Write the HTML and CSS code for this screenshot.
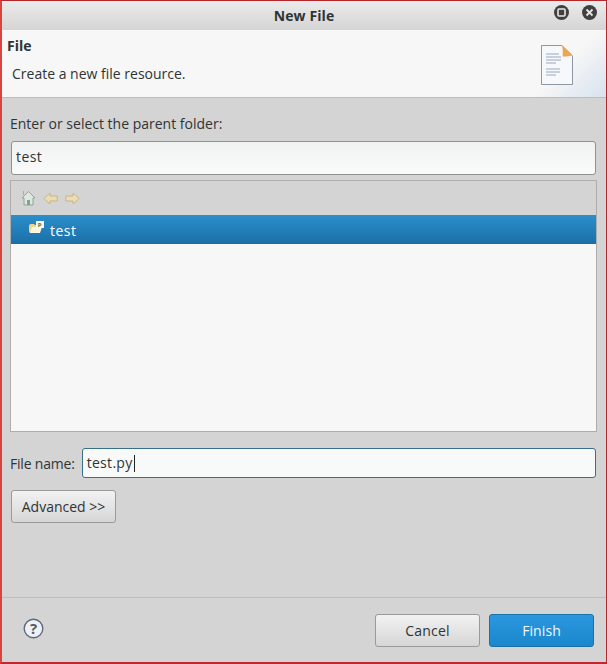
FILE: index.html
```html
<!DOCTYPE html>
<html lang="en">
<head>
    <meta charset="UTF-8">
    <title>New File</title>
    <link rel="stylesheet" href="styles.css">
</head>
<body>
    <div class="window">
        <div class="titlebar">
            <span class="title">New File</span>
            <div class="win-buttons">
                <span class="win-btn">
                    <svg width="13" height="13" viewBox="0 0 13 13"><rect x="3" y="3" width="7" height="7" rx="1" fill="none" stroke="#e8e8e8" stroke-width="1.6"/></svg>
                </span>
                <span class="win-btn">
                    <svg width="13" height="13" viewBox="0 0 13 13"><path d="M3.5 3.5l6 6M9.5 3.5l-6 6" stroke="#e8e8e8" stroke-width="1.8"/></svg>
                </span>
            </div>
        </div>

        <div class="banner">
            <div class="banner-text">
                <div class="banner-title">File</div>
                <div class="banner-desc">Create a new file resource.</div>
            </div>
            <svg class="banner-icon" width="32" height="41" viewBox="0 0 32 41">
                <path d="M.5.5H21L31.5 11V39.5H.5Z" fill="#f6f8fb" stroke="#8b97a5"/>
                <path d="M21 .5c1 4 1 8 .5 11 3 .3 7-.3 10-1.500Z" fill="#eda650"/>
                <path d="M5 9h13M5 12h15M5 15h15M5 18h10M5 24h14M5 27h14M5 30h10" stroke="#98a8bd" stroke-width="1.200"/>
            </svg>
        </div>

        <div class="content">
            <label class="field-label">Enter or select the parent folder:</label>
            <div class="input parent-input">test</div>

            <div class="tree">
                <div class="tree-toolbar">
                    <svg width="15" height="16" viewBox="0 0 15 16"><path d="M7.500 1.500L1 8h2v7h9V8h2Z" fill="#dfe8e0" stroke="#8fa39a"/><path d="M2.500 1v4" stroke="#b9a88f"/><rect x="6" y="10" width="3" height="5" fill="#7fa58f"/></svg>
                    <svg width="15" height="13" viewBox="0 0 15 13"><path d="M.8 6.500L7 1v3h7.200v5H7v3Z" fill="#ebdcb5" stroke="#c9b585"/></svg>
                    <svg width="15" height="13" viewBox="0 0 15 13"><path d="M14.200 6.500L8 1v3H.8v5H8v3Z" fill="#ebdcb5" stroke="#c9b585"/></svg>
                </div>
                <div class="tree-list">
                    <div class="tree-row">
                        <svg width="15" height="13" viewBox="0 0 15 13"><path d="M0 5q0-2 2-2h3l1 1h3v8H2q-2 0-2-2Z" fill="#f3d68c"/><path d="M1 12l2-6h10l-2 6Z" fill="#fdf6e0"/><rect x="7" y="0" width="8" height="7" fill="#f4f7f2"/><text x="11" y="6.300" text-anchor="middle" class="badge-mark">P</text></svg>
                        <span>test</span>
                    </div>
                </div>
            </div>

            <div class="name-row">
                <label class="name-label">File name:</label>
                <div class="input name-input">test.py<span class="caret"></span></div>
            </div>

            <button class="btn advanced">Advanced &gt;&gt;</button>
        </div>

        <div class="footer">
            <svg class="help" width="21" height="21" viewBox="0 0 21 21">
                <circle cx="10.500" cy="10.500" r="9.300" fill="#eef1f5" stroke="#5f6b7c" stroke-width="1.400"/>
                <text x="10.500" y="16" text-anchor="middle" class="help-mark">?</text>
            </svg>
            <div class="footer-buttons">
                <button class="btn cancel">Cancel</button>
                <button class="btn finish">Finish</button>
            </div>
        </div>
    </div>
</body>
</html>
```

FILE: styles.css
```css
html, body {
    margin: 0;
    padding: 0;
    height: 100%;
}

body {
    font-family: 'Open Sans', sans-serif;
    font-size: 14px;
    color: #2e3436;
    overflow: hidden;
}

.window {
    box-sizing: border-box;
    width: 607px;
    height: 664px;
    display: flex;
    flex-direction: column;
    background: #d4d4d4;
    border: 1px solid #b5272b;
    border-left: 2px solid #d9443f;
    border-bottom: 2px solid #c0282c;
}

.titlebar {
    height: 29px;
    flex: none;
    display: flex;
    align-items: center;
    justify-content: center;
    position: relative;
    background: linear-gradient(#ecebeb, #d5d5d5);
}

.title {
    font-weight: 700;
    font-size: 14px;
    letter-spacing: 0.1px;
}

.win-buttons {
    position: absolute;
    top: 4px;
    right: 9px;
    display: flex;
    gap: 13px;
}

.win-btn {
    width: 15px;
    height: 15px;
    border-radius: 50%;
    background: #404040;
    display: flex;
    align-items: center;
    justify-content: center;
}

.banner {
    height: 67px;
    flex: none;
    display: flex;
    justify-content: space-between;
    background: linear-gradient(135deg, #f7f7f7 89%, #d8e2ee 100%);
    border-bottom: 1px solid #bdbdbd;
}

.banner-text {
    padding: 7px 0 0 5px;
}

.banner-title {
    font-weight: 700;
    font-size: 14px;
    line-height: 18px;
}

.banner-desc {
    margin: 10px 0 0 5px;
    line-height: 18px;
}

.banner-icon {
    margin: 15px 33px 0 0;
}

.content {
    flex: 1;
    display: flex;
    flex-direction: column;
    padding: 17px 9px 0 8px;
}

.field-label {
    line-height: 18px;
}

.input {
    box-sizing: border-box;
    background: linear-gradient(#f0f2f2, #fafafa);
    border: 1px solid #8f9292;
    border-radius: 3px;
    line-height: 18px;
    letter-spacing: 0.4px;
}

.parent-input {
    height: 34px;
    margin: 8px 1px 0 1px;
    padding: 6px 4px;
}

.tree {
    height: 250px;
    margin-top: 5px;
    display: flex;
    flex-direction: column;
    border: 1px solid #adadad;
}

.tree-toolbar {
    height: 34px;
    flex: none;
    display: flex;
    align-items: center;
    gap: 7px;
    padding-left: 10px;
}

.tree-list {
    flex: 1;
    background: #f7f7f7;
}

.tree-row {
    height: 29px;
    box-sizing: border-box;
    display: flex;
    align-items: center;
    gap: 6px;
    padding: 1px 0 0 18px;
    color: #fff;
    letter-spacing: 0.5px;
    background: linear-gradient(#2a8fcb, #1b6fa8);
}

.tree-row svg {
    margin-top: -6px;
}

.badge-mark {
    font-family: 'Open Sans', sans-serif;
    font-size: 6px;
    font-weight: 700;
    fill: #2f7d3a;
}

.name-row {
    display: flex;
    align-items: center;
    gap: 7px;
    margin: 16px 1px 0 0;
}

.name-label {
    letter-spacing: -0.2px;
}

.name-input {
    flex: 1;
    height: 30px;
    padding: 5px 4px;
    background: #f8fafa;
    border: 1px solid #3a6f8a;
    letter-spacing: 0.3px;
}

.caret {
    display: inline-block;
    width: 1px;
    height: 17px;
    margin-left: 1px;
    vertical-align: -4px;
    background: #222;
}

.btn {
    box-sizing: border-box;
    font-family: 'Open Sans', sans-serif;
    font-size: 14px;
    color: #2e3436;
    padding: 0;
    border: 1px solid #9a9a9a;
    border-radius: 3px;
    background: linear-gradient(#f2f2f2, #d6d6d6);
}

.advanced {
    width: 105px;
    height: 33px;
    margin: 12px 0 0 1px;
}

.footer {
    height: 65px;
    flex: none;
    box-sizing: border-box;
    display: flex;
    align-items: center;
    justify-content: space-between;
    padding: 0 12px 4px 21px;
    border-top: 1px solid #bdbdbd;
}

.help-mark {
    font-family: 'Open Sans', sans-serif;
    font-size: 15px;
    font-weight: 700;
    fill: #4f5b6c;
}

.footer-buttons {
    display: flex;
    gap: 9px;
    margin-top: 4px;
}

.cancel, .finish {
    width: 105px;
    height: 33px;
}

.cancel {
    letter-spacing: 0.2px;
}

.finish {
    color: #f2f8fc;
    letter-spacing: 0.1px;
    border-color: #1a70a8;
    background: linear-gradient(#2a97df, #1b87cc);
}
```
